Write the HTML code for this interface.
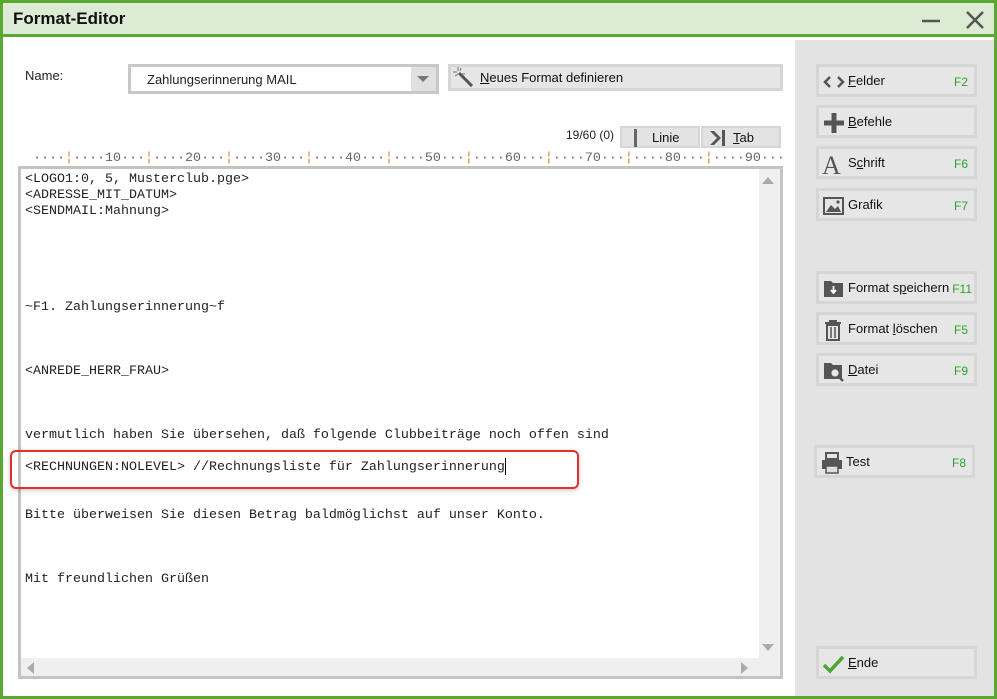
<!DOCTYPE html>
<html><head><meta charset="utf-8">
<style>
*{box-sizing:border-box;margin:0;padding:0}
body{width:997px;height:699px;overflow:hidden;background:#fff;font-family:"Liberation Sans",sans-serif;position:relative}
.abs{position:absolute}
.frame{left:0;top:0;width:997px;height:699px;border:3px solid #5aa832}
.title{left:3px;top:3px;width:991px;height:34px;background:#dcebd4;border-bottom:3px solid #5aa832}
.title span{position:absolute;left:10px;top:6px;font-size:17px;font-weight:bold;color:#111}
.side{left:795px;top:40px;width:199px;height:656px;background:#e3e3e3}
.btn{position:absolute;background:#e6e6e6;border:3px solid #d6d6d6;font-size:13px;color:#111}
.btn .l{position:absolute;left:29px;top:6px}
.btn .k{position:absolute;right:6px;top:8px;color:#2aa52a;font-size:12px}
.btn svg{position:absolute;left:3px;top:4px}
.mono{font-family:"Liberation Mono",monospace;font-size:13.33px;white-space:pre;color:#222}
u{text-decoration:underline}
</style></head><body>
<div class="abs frame"></div>
<div class="abs title"><span>Format-Editor</span>
<svg class="abs" style="left:918px;top:8px" width="20" height="20"><line x1="1" y1="10" x2="19" y2="10" stroke="#555" stroke-width="2.5"/></svg>
<svg class="abs" style="left:961px;top:6px" width="22" height="22"><path d="M3 3L19 19M19 3L3 19" stroke="#555" stroke-width="2.5"/></svg>
</div>
<div class="abs side"></div>

<div class="abs" style="left:25px;top:68px;font-size:13px;color:#222">Name:</div>
<div class="abs" style="left:128px;top:64px;width:311px;height:30px;border:3px solid #c8c8c8;background:#fff">
 <div class="abs" style="left:16px;top:5px;font-size:13px;color:#222">Zahlungserinnerung MAIL</div>
 <div class="abs" style="left:280px;top:0;width:25px;height:24px;background:#e0e0e0"></div>
 <svg class="abs" style="left:286px;top:9px" width="12" height="7"><path d="M0 0H12L6 6Z" fill="#777"/></svg>
</div>
<div class="abs" style="left:448px;top:64px;width:335px;height:27px;background:#e6e6e6;border:3px solid #d6d6d6">
 <svg class="abs" style="left:2px;top:0px" width="22" height="20"><path d="M6 6L19 19" stroke="#555" stroke-width="3"/><path d="M5 0V4M0 5H4M8 1L7 4M2 9L5 7M9 7H12" stroke="#888" stroke-width="1.2"/></svg>
 <div class="abs" style="left:29px;top:3px;font-size:13px;color:#111"><u>N</u>eues Format definieren</div>
</div>

<div class="abs" style="left:566px;top:128px;font-size:12px;color:#222">19/60 (0)</div>
<div class="abs" style="left:620px;top:126px;width:80px;height:22px;background:#e3e3e3;border:2px solid #d6d6d6">
 <div class="abs" style="left:12px;top:1px;width:3px;height:18px;background:#666"></div>
 <div class="abs" style="left:30px;top:2px;font-size:13px;color:#111">Linie</div></div>
<div class="abs" style="left:701px;top:126px;width:80px;height:22px;background:#e3e3e3;border:2px solid #d6d6d6">
 <svg class="abs" style="left:6px;top:1px" width="18" height="18"><path d="M1 2L8 9L1 16H5L12 9L5 2Z" fill="#555"/><rect x="13" y="1" width="3" height="16" fill="#555"/></svg>
 <div class="abs" style="left:30px;top:2px;font-size:13px;color:#111"><u>T</u>ab</div></div>

<div class="abs mono" style="left:33px;top:151px;color:#666;font-size:13.33px">····<span style="color:#e08020">¦</span>····10···<span style="color:#e08020">¦</span>····20···<span style="color:#e08020">¦</span>····30···<span style="color:#e08020">¦</span>····40···<span style="color:#e08020">¦</span>····50···<span style="color:#e08020">¦</span>····60···<span style="color:#e08020">¦</span>····70···<span style="color:#e08020">¦</span>····80···<span style="color:#e08020">¦</span>····90···</div>

<div class="abs" style="left:18px;top:166px;width:765px;height:513px;border:3px solid #c4c4c4;background:#efefef">
 <div class="abs" style="left:0;top:0;width:738px;height:489px;background:#fff"></div>
 <svg class="abs" style="left:741px;top:8px" width="12" height="8"><path d="M0 7H12L6 0Z" fill="#aaa"/></svg>
 <svg class="abs" style="left:741px;top:475px" width="12" height="8"><path d="M0 0H12L6 7Z" fill="#aaa"/></svg>
 <svg class="abs" style="left:6px;top:493px" width="8" height="12"><path d="M7 0V12L0 6Z" fill="#aaa"/></svg>
 <svg class="abs" style="left:720px;top:493px" width="8" height="12"><path d="M0 0V12L7 6Z" fill="#aaa"/></svg>
</div>
<div class="abs mono" style="left:25px;top:172px;line-height:16px">&lt;LOGO1:0, 5, Musterclub.pge&gt;
&lt;ADRESSE_MIT_DATUM&gt;
&lt;SENDMAIL:Mahnung&gt;





~F1. Zahlungserinnerung~f



&lt;ANREDE_HERR_FRAU&gt;



vermutlich haben Sie übersehen, daß folgende Clubbeiträge noch offen sind

&lt;RECHNUNGEN:NOLEVEL&gt; //Rechnungsliste für Zahlungserinnerung


Bitte überweisen Sie diesen Betrag baldmöglichst auf unser Konto.



Mit freundlichen Grüßen</div>
<div class="abs" style="left:505px;top:458px;width:1px;height:17px;background:#000"></div>
<div class="abs" style="left:10px;top:450px;width:569px;height:39px;border:2px solid #e03030;border-radius:6px;box-shadow:0 1px 4px rgba(0,0,0,.25)"></div>

<div class="btn" style="left:816px;top:64px;width:161px;height:33px"><svg width="24" height="22"><path d="M8 6L3 11L8 16M16 6L21 11L16 16" stroke="#555" stroke-width="2.5" fill="none"/></svg><span class="l"><u>F</u>elder</span><span class="k">F2</span></div>
<div class="btn" style="left:816px;top:105px;width:161px;height:33px"><svg width="24" height="22"><path d="M12 1V21M2 11H22" stroke="#555" stroke-width="5"/></svg><span class="l"><u>B</u>efehle</span></div>
<div class="btn" style="left:816px;top:146px;width:161px;height:33px"><svg width="24" height="24"><text x="0" y="21" font-family="Liberation Serif" font-size="26" fill="#555">A</text></svg><span class="l">S<u>c</u>hrift</span><span class="k">F6</span></div>
<div class="btn" style="left:816px;top:188px;width:161px;height:33px"><svg width="24" height="22"><rect x="2" y="3" width="19" height="16" fill="none" stroke="#555" stroke-width="2"/><path d="M4 17L9 10L13 14L16 11L19 17Z" fill="#555"/><circle cx="16" cy="7" r="1.6" fill="#555"/></svg><span class="l">Grafik</span><span class="k">F7</span></div>
<div class="btn" style="left:816px;top:271px;width:161px;height:33px"><svg width="24" height="22"><path d="M2 3H9L11 5H21V19H2Z" fill="#555"/><path d="M11.5 8V14M9 12L11.5 15L14 12" stroke="#fff" stroke-width="1.8" fill="none"/></svg><span class="l">Format s<u>p</u>eichern</span><span class="k" style="right:2px">F11</span></div>
<div class="btn" style="left:816px;top:312px;width:161px;height:33px"><svg width="24" height="24"><path d="M3 4H19M8 4V2H14V4M5 6H17V21H5Z" stroke="#555" stroke-width="2" fill="none"/><path d="M9 8V19M13 8V19" stroke="#555" stroke-width="1.5"/></svg><span class="l">Format <u>l</u>öschen</span><span class="k">F5</span></div>
<div class="btn" style="left:816px;top:353px;width:161px;height:33px"><svg width="26" height="24"><path d="M2 3H9L11 5H20V19H2Z" fill="#555"/><circle cx="13" cy="13" r="4.5" fill="#e6e6e6" stroke="#555" stroke-width="1.8"/><path d="M16 16L21 21" stroke="#555" stroke-width="2.5"/></svg><span class="l"><u>D</u>atei</span><span class="k">F9</span></div>
<div class="btn" style="left:814px;top:445px;width:161px;height:33px"><svg width="24" height="24"><rect x="6" y="1" width="12" height="6" fill="none" stroke="#555" stroke-width="2"/><path d="M2 8H22V17H2Z" fill="#555"/><rect x="6" y="14" width="12" height="7" fill="#ddd" stroke="#555" stroke-width="1.5"/></svg><span class="l">Test</span><span class="k">F8</span></div>
<div class="btn" style="left:816px;top:646px;width:161px;height:33px"><svg width="24" height="22"><path d="M2 12L8 18L21 4" stroke="#4aa534" stroke-width="3.5" fill="none"/></svg><span class="l"><u>E</u>nde</span></div>
</body></html>
